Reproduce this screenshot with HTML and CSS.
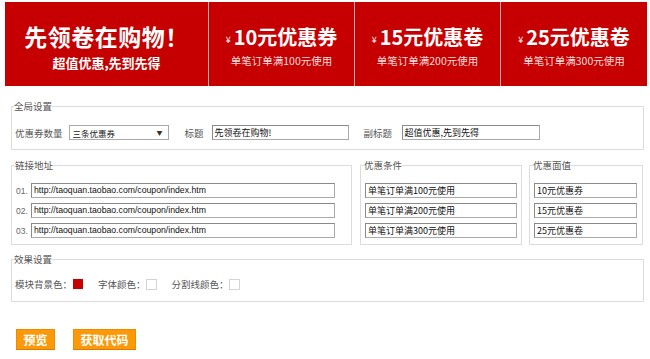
FILE: index.html
```html
<!DOCTYPE html>
<html lang="zh-CN">
<head>
<meta charset="utf-8">
<title>优惠券模块</title>
<link rel="stylesheet" href="styles.css">
</head>
<body>
<div class="banner">
  <div class="hero">
    <div class="hero-title">先领卷在购物！</div>
    <div class="hero-sub">超值优惠,先到先得</div>
  </div>
  <div class="coupon c1">
    <div class="c-title"><span class="yen">¥</span>10元优惠券</div>
    <div class="c-sub">单笔订单满100元使用</div>
  </div>
  <div class="coupon c2">
    <div class="c-title"><span class="yen">¥</span>15元优惠卷</div>
    <div class="c-sub">单笔订单满200元使用</div>
  </div>
  <div class="coupon c3">
    <div class="c-title"><span class="yen">¥</span>25元优惠卷</div>
    <div class="c-sub">单笔订单满300元使用</div>
  </div>
</div>

<div class="wrap">
  <fieldset class="fs fs-global">
    <legend>全局设置</legend>
    <div class="row-global">
      <span class="lbl">优惠券数量</span>
      <div class="select"><span>三条优惠券</span><span class="arrow">▼</span></div>
      <span class="lbl lbl-title">标题</span>
      <div class="inp inp-title">先领卷在购物!</div>
      <span class="lbl lbl-sub">副标题</span>
      <div class="inp inp-sub">超值优惠,先到先得</div>
    </div>
  </fieldset>

  <div class="row-three">
    <fieldset class="fs fs-link">
      <legend>链接地址</legend>
      <div class="line"><span class="num">01.</span><div class="inp inp-url">http://taoquan.taobao.com/coupon/index.htm</div></div>
      <div class="line"><span class="num">02.</span><div class="inp inp-url">http://taoquan.taobao.com/coupon/index.htm</div></div>
      <div class="line"><span class="num">03.</span><div class="inp inp-url">http://taoquan.taobao.com/coupon/index.htm</div></div>
    </fieldset>
    <fieldset class="fs fs-cond">
      <legend>优惠条件</legend>
      <div class="line"><div class="inp inp-cond">单笔订单满100元使用</div></div>
      <div class="line"><div class="inp inp-cond">单笔订单满200元使用</div></div>
      <div class="line"><div class="inp inp-cond">单笔订单满300元使用</div></div>
    </fieldset>
    <fieldset class="fs fs-val">
      <legend>优惠面值</legend>
      <div class="line"><div class="inp inp-val">10元优惠券</div></div>
      <div class="line"><div class="inp inp-val">15元优惠卷</div></div>
      <div class="line"><div class="inp inp-val">25元优惠卷</div></div>
    </fieldset>
  </div>

  <fieldset class="fs fs-effect">
    <legend>效果设置</legend>
    <div class="row-effect">
      <span class="lbl">模块背景色：</span><span class="swatch swatch-red"></span>
      <span class="lbl lbl-gap">字体颜色：</span><span class="swatch"></span>
      <span class="lbl lbl-gap">分割线颜色：</span><span class="swatch"></span>
    </div>
  </fieldset>

  <div class="buttons">
    <button class="btn btn-preview">预览</button>
    <button class="btn btn-code">获取代码</button>
  </div>
</div>
</body>
</html>
```

FILE: styles.css
```css
* { box-sizing: border-box; }
body {
  margin: 0;
  background: #fff;
  font-family: "Noto Sans CJK SC", "Liberation Sans", sans-serif;
  color: #555;
  font-size: 9.5px;
}

.banner {
  display: flex;
  margin: 2px 3px 0 5px;
  height: 84px;
  background: #c60000;
  color: #fff;
}
.hero {
  width: 203px;
  display: flex;
  flex-direction: column;
  align-items: center;
  padding-top: 19px;
}
.hero-title {
  font-size: 23px;
  font-weight: bold;
  line-height: 30px;
  letter-spacing: 0.5px;
}
.hero-sub {
  font-size: 13px;
  font-weight: bold;
  line-height: 18px;
  margin-top: 3px;
}
.coupon {
  border-left: 1px solid #e9a7a7;
  display: flex;
  flex-direction: column;
  align-items: center;
  padding-top: 22px;
}
.c1, .c2 { width: 146px; }
.c3 { width: 147px; }
.c-title {
  font-size: 20px;
  font-weight: bold;
  line-height: 26px;
  white-space: nowrap;
}
.yen {
  font-size: 9px;
  font-weight: normal;
  margin-right: 3px;
  vertical-align: 2px;
}
.c-sub {
  font-size: 10.5px;
  line-height: 14px;
  color: #f6dede;
  margin-top: 1px;
}

.wrap {
  padding: 0 6px 0 11px;
}
.fs {
  border: 1px solid #dcdcdc;
  margin: 0;
  min-width: 0;
}
.fs legend {
  font-size: 9.5px;
  line-height: 14px;
  color: #555;
  padding: 0;
  margin-left: -1px;
}

.fs-global {
  margin-top: 13px;
  padding: 12px 3px 9px 3px;
}
.row-global {
  display: flex;
  align-items: center;
  height: 15px;
}
.lbl { white-space: nowrap; color: #555; line-height: 14px; }
.select {
  margin-left: 6px;
  width: 100px;
  height: 15px;
  border: 1px solid #a9a9a9;
  display: flex;
  align-items: center;
  justify-content: space-between;
  padding: 0 5px 0 3px;
  font-size: 8.5px;
  color: #222;
}
.arrow { font-size: 6px; color: #333; }
.lbl-title { margin-left: 16px; width: 19px; }
.inp {
  height: 15px;
  border: 1px solid #a9a9a9;
  border-top-color: #8a8a8a;
  border-left-color: #8a8a8a;
  font-size: 9px;
  line-height: 13px;
  color: #111;
  padding-left: 2px;
  white-space: nowrap;
  overflow: hidden;
}
.inp-title { width: 137px; margin-left: 8px; }
.lbl-sub { margin-left: 15px; width: 33px; }
.inp-sub { width: 138px; margin-left: 5px; }

.row-three {
  display: flex;
  margin-top: 8px;
}
.row-three .fs { padding: 11px 4px 6px 4px; }
.fs-link { width: 341px; }
.fs-cond { width: 162px; margin-left: 8px; }
.fs-val { width: 114px; margin-left: 7px; }
.line {
  display: flex;
  align-items: center;
  height: 15px;
}
.line + .line { margin-top: 5px; }
.num {
  font-family: "Liberation Sans", sans-serif;
  font-size: 8.5px;
  color: #666;
  width: 15px;
}
.inp-url {
  width: 304px;
  font-family: "Liberation Sans", sans-serif;
  font-size: 8.7px;
}
.inp-cond { width: 152px; }
.inp-val { width: 103px; }

.fs-effect {
  margin-top: 7px;
  padding: 12px 3px 11px 3px;
}
.row-effect {
  display: flex;
  align-items: center;
  height: 12px;
}
.swatch {
  width: 11px;
  height: 11px;
  border: 1px solid #d4d4d4;
  background: #fff;
}
.swatch-red {
  background: #c60000;
  border-color: #c60000;
  width: 10px;
  height: 10px;
  margin-left: 1px;
}
.lbl-gap { margin-left: 15px; }

.buttons {
  display: flex;
  margin-top: 27px;
  padding-left: 5px;
}
.btn {
  height: 21px;
  background: #fa9a0a;
  border: 1px solid #f08a00;
  border-bottom-color: #e07800;
  color: #fff;
  font-family: "Noto Sans CJK SC", sans-serif;
  font-weight: bold;
  font-size: 12px;
  line-height: 19px;
  padding: 0;
  cursor: pointer;
}
.btn-preview { width: 39px; }
.btn-code { width: 63px; margin-left: 18px; }
```
